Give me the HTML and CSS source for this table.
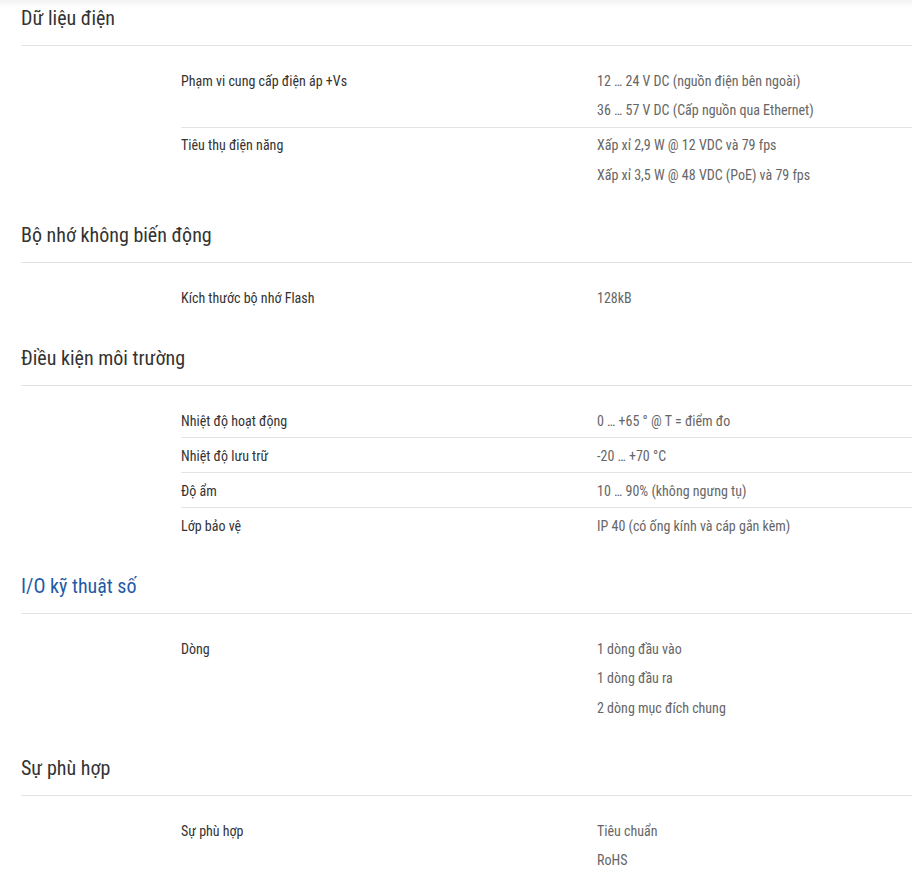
FILE: index.html
```html
<!DOCTYPE html>
<html lang="vi">
<head>
  <meta charset="UTF-8" />
  <meta name="viewport" content="width=device-width, initial-scale=1.0" />
  <title>Thông số kỹ thuật</title>
  <link rel="stylesheet" href="styles.css">
</head>
<body>
  <div class="specs">

    <section class="spec-group">
      <h2 class="spec-title">Dữ liệu điện</h2>
      <div class="spec-body">
        <div class="spec-row">
          <div class="spec-label">Phạm vi cung cấp điện áp +Vs</div>
          <div class="spec-value">
            <p>12 … 24 V DC (nguồn điện bên ngoài)</p>
            <p>36 … 57 V DC (Cấp nguồn qua Ethernet)</p>
          </div>
        </div>
        <div class="spec-row">
          <div class="spec-label">Tiêu thụ điện năng</div>
          <div class="spec-value">
            <p>Xấp xỉ 2,9 W @ 12 VDC và 79 fps</p>
            <p>Xấp xỉ 3,5 W @ 48 VDC (PoE) và 79 fps</p>
          </div>
        </div>
      </div>
    </section>

    <section class="spec-group">
      <h2 class="spec-title">Bộ nhớ không biến động</h2>
      <div class="spec-body">
        <div class="spec-row">
          <div class="spec-label">Kích thước bộ nhớ Flash</div>
          <div class="spec-value"><p>128kB</p></div>
        </div>
      </div>
    </section>

    <section class="spec-group">
      <h2 class="spec-title">Điều kiện môi trường</h2>
      <div class="spec-body">
        <div class="spec-row">
          <div class="spec-label">Nhiệt độ hoạt động</div>
          <div class="spec-value"><p>0 … +65 ° @ T = điểm đo</p></div>
        </div>
        <div class="spec-row">
          <div class="spec-label">Nhiệt độ lưu trữ</div>
          <div class="spec-value"><p>-20 … +70 °C</p></div>
        </div>
        <div class="spec-row">
          <div class="spec-label">Độ ẩm</div>
          <div class="spec-value"><p>10 … 90% (không ngưng tụ)</p></div>
        </div>
        <div class="spec-row">
          <div class="spec-label">Lớp bảo vệ</div>
          <div class="spec-value"><p>IP 40 (có ống kính và cáp gắn kèm)</p></div>
        </div>
      </div>
    </section>

    <section class="spec-group">
      <h2 class="spec-title active">I/O kỹ thuật số</h2>
      <div class="spec-body">
        <div class="spec-row">
          <div class="spec-label">Dòng</div>
          <div class="spec-value">
            <p>1 dòng đầu vào</p>
            <p>1 dòng đầu ra</p>
            <p>2 dòng mục đích chung</p>
          </div>
        </div>
      </div>
    </section>

    <section class="spec-group">
      <h2 class="spec-title">Sự phù hợp</h2>
      <div class="spec-body">
        <div class="spec-row">
          <div class="spec-label">Sự phù hợp</div>
          <div class="spec-value">
            <p>Tiêu chuẩn</p>
            <p>RoHS</p>
          </div>
        </div>
      </div>
    </section>

  </div>
</body>
</html>
```

FILE: styles.css
```css
* {
  margin: 0;
  padding: 0;
  box-sizing: border-box;
}

body {
  font-family: "Roboto Condensed", "Liberation Sans Narrow", Roboto, sans-serif;
  background: #fff;
  color: #333;
  overflow: hidden;
}

.specs {
  padding: 3px 0 0 21px;
  position: relative;
}

/* faint shadow from the header above */
.specs::before {
  content: '';
  position: absolute;
  top: 0;
  left: 0;
  right: 0;
  height: 8px;
  background: linear-gradient(rgba(0, 0, 0, 0.05), rgba(0, 0, 0, 0));
}

.spec-group {
  margin-bottom: 29px;
}

.spec-title {
  font-size: 20px;
  font-weight: 400;
  line-height: 30px;
  color: #333;
  padding-bottom: 12px;
  border-bottom: 1px solid #e3e3e3;
}

.spec-title.active {
  color: #1f5ba6;
}

.spec-body {
  padding: 17px 0 0 160px;
}

.spec-row {
  display: grid;
  grid-template-columns: 416px 1fr;
  padding: 3.75px 0 0.75px;
  font-size: 14px;
  line-height: 29.5px;
}

.spec-row + .spec-row {
  border-top: 1px solid #e3e3e3;
}

.spec-label {
  color: #333;
}

.spec-value {
  color: #666;
}
```
